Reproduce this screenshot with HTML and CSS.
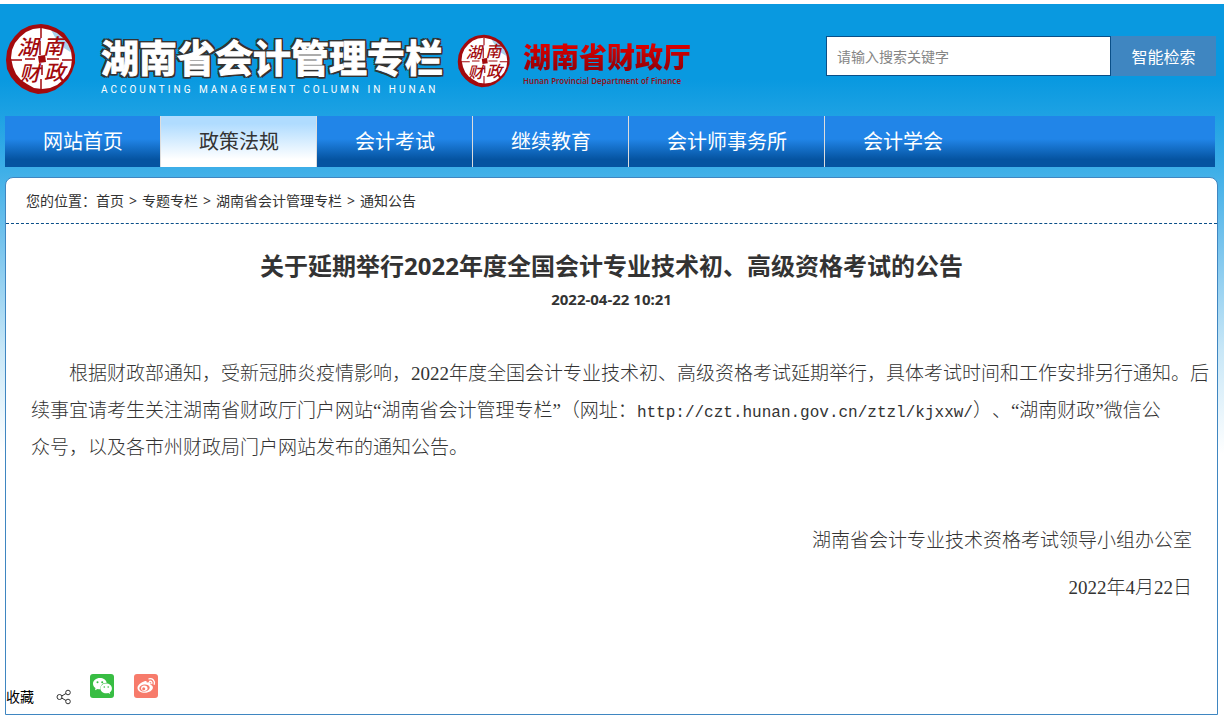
FILE: index.html
```html
<!DOCTYPE html>
<html lang="zh-CN">
<head>
  <meta charset="UTF-8">
  <meta name="viewport" content="width=device-width, initial-scale=1.0">
  <title>关于延期举行2022年度全国会计专业技术初、高级资格考试的公告</title>
  <link rel="stylesheet" href="styles.css">
</head>
<body>

<!-- seal used twice in the header -->
<svg class="defs" width="0" height="0" aria-hidden="true">
  <symbol id="seal" viewBox="0 0 72 72" overflow="visible">
    <circle cx="36" cy="36" r="33" fill="#fff"/>
    <path d="M46 7c10 3 18 11 21 23l-8-5-8-9z" fill="#a9d3ec"/>
    <path d="M28 2l8-1 7 1 8 3 8 5 5 7 4 7 2 8 0 8-3 9-4 7-6 6-7 5-8 3-9 1-8-2-8-4-6-5-5-6-4-8-1-9 1-9 3-8 5-7 6-6 8-4zM36 5l-8 1-7 3-6 5-5 6-3 7-1 8 2 9 3 7 5 6 6 4 7 4 8 1 8-1 7-3 6-5 5-6 3-7 1-8-1-8-3-7-5-6-6-5-7-3z" fill="#a30a0d" fill-rule="evenodd"/>
    <path d="M36 5v10M35 18v14M37 42v10M36 56v12M5 37h12M20 36h10M42 36h12M57 37h11" stroke="#a30a0d" stroke-width="1.500"/>
    <path d="M33 33l7-1 1 7-7 1z" fill="#a30a0d"/>
    <g class="seal-text">
      <text x="12" y="32">湖</text>
      <text x="38" y="31">南</text>
      <text x="14" y="58">财</text>
      <text x="39" y="57">政</text>
    </g>
  </symbol>
</svg>

<div class="container">
  <header class="header">
    <a href="#" class="logo">
      <svg class="seal" width="72" height="72" aria-hidden="true"><use href="#seal"/></svg>
      <span class="logo-text">
        <strong class="logo-name">湖南省会计管理专栏</strong>
        <span class="logo-en">ACCOUNTING MANAGEMENT COLUMN IN HUNAN</span>
      </span>
    </a>
    <a href="#" class="dept">
      <svg class="seal" width="54" height="54" aria-hidden="true"><use href="#seal"/></svg>
      <span class="dept-text">
        <strong class="dept-name">湖南省财政厅</strong>
        <span class="dept-en">Hunan Provincial Department of Finance</span>
      </span>
    </a>
    <form class="search">
      <input type="text" name="q" placeholder="请输入搜索关键字" aria-label="请输入搜索关键字">
      <button type="submit">智能检索</button>
    </form>
  </header>

  <nav class="nav">
    <a href="#">网站首页</a>
    <a href="#" class="active">政策法规</a>
    <a href="#">会计考试</a>
    <a href="#">继续教育</a>
    <a href="#">会计师事务所</a>
    <a href="#">会计学会</a>
  </nav>

  <main class="panel">
    <div class="position">
      您的位置：<a href="#">首页</a><span>&gt;</span><a href="#">专题专栏</a><span>&gt;</span><a href="#">湖南省会计管理专栏</a><span>&gt;</span><a href="#">通知公告</a>
    </div>

    <article class="article">
      <h1>关于延期举行2022年度全国会计专业技术初、高级资格考试的公告</h1>
      <time class="date">2022-04-22 10:21</time>
      <div class="content">
        <p>根据财政部通知，受新冠肺炎疫情影响，2022年度全国会计专业技术初、高级资格考试延期举行，具体考试时间和工作安排另行通知。后续事宜请考生关注湖南省财政厅门户网站“湖南省会计管理专栏”（网址：<span class="url">http://czt.hunan.gov.cn/ztzl/kjxxw/</span>）、“湖南财政”微信公<br>众号，以及各市州财政局门户网站发布的通知公告。</p>
      </div>
      <div class="sign">
        <p>湖南省会计专业技术资格考试领导小组办公室</p>
        <p>2022年4月22日</p>
      </div>
    </article>

    <div class="share">
      <a href="#" class="fav">收藏</a>
      <a href="#" class="share-link" aria-label="分享">
        <svg width="16" height="16" viewBox="0 0 16 16" fill="none" stroke="#333">
          <circle cx="3.500" cy="8" r="2.500"/>
          <circle cx="12" cy="3.500" r="2.300"/>
          <circle cx="12" cy="12.500" r="2.300"/>
          <path d="M5.700 7l4.300-2.500M5.700 9l4.300 2.500"/>
        </svg>
      </a>
      <a href="#" class="icon wechat" aria-label="微信">
        <svg width="24" height="24" viewBox="0 0 24 24">
          <path d="M10 4c-4 0-7 2.500-7 5.700 0 1.800 1 3.400 2.500 4.400L5 16.200l2.500-1.300c.8.200 1.600.3 2.500.3h.6c-.9-3.700 2.200-6.700 6.200-6.500C16.100 5.900 13.300 4 10 4z" fill="#fff"/>
          <path d="M16.200 9.600c-3.300 0-5.700 2.100-5.700 4.800s2.500 4.900 5.700 4.900c.7 0 1.400-.1 2-.3l2 1.100-.5-1.800c1.400-.9 2.200-2.300 2.200-3.900 0-2.700-2.500-4.800-5.700-4.800z" fill="#fff"/>
          <g fill="#38bd43"><circle cx="7.500" cy="8.300" r="1"/><circle cx="12.200" cy="8.300" r="1"/><circle cx="14.300" cy="13" r=".8"/><circle cx="18.200" cy="13" r=".8"/></g>
        </svg>
      </a>
      <a href="#" class="icon weibo" aria-label="微博">
        <svg width="24" height="24" viewBox="0 0 24 24">
          <path d="M10.500 7.200c1.400-.6 2.500-.2 2.300 1.500 1.900-.7 3.800-.7 3.900.7 0 .5-.2.900-.3 1.300 1.500.4 2.500 1.300 2.500 2.700 0 2.700-3.600 5.300-8.200 5.300-4 0-7.200-1.800-7.200-4.800 0-3 4-5.700 7-6.700z" fill="#fff"/>
          <ellipse cx="10.500" cy="14" rx="5.200" ry="3.500" fill="#f77b6b" transform="rotate(-8 10.500 14)"/>
          <ellipse cx="10.300" cy="14.300" rx="3.200" ry="2.700" fill="#fff"/>
          <circle cx="9.700" cy="14.800" r="1.500" fill="#f77b6b"/>
          <path d="M15 4.800c3.500-.8 6.300 2 5.200 5.500M15.500 7.300c1.700-.3 2.800.8 2.300 2.400" fill="none" stroke="#fff" stroke-width="1.300" stroke-linecap="round"/>
        </svg>
      </a>
    </div>
  </main>
</div>

</body>
</html>
```

FILE: styles.css
```css
* {
  box-sizing: border-box;
}

body {
  margin: 0;
  padding: 4px 0;
  font-family: "Noto Sans", "Noto Sans CJK SC", sans-serif;
  font-size: 14px;
  color: #333;
  background: #fff linear-gradient(#0999e0, #0999e0 76px, #3eafe8 166px, #78c4ed 240px, #c8e7f7 346px, #fff 450px) no-repeat 0 4px;
}

a {
  color: inherit;
  text-decoration: none;
}

.defs {
  position: absolute;
}

.container {
  padding: 0 6px 0 5px;
}

/* header */
.header {
  display: flex;
  height: 112px;
  padding-right: 2px;
}

.logo,
.dept {
  display: flex;
  align-items: flex-start;
}

.seal {
  flex: none;
  overflow: visible;
}

.seal-text {
  font-family: "Noto Sans CJK SC", sans-serif;
  font-size: 21px;
  font-style: italic;
  font-weight: 500;
  fill: #a30a0d;
}

.logo {
  padding-top: 19px;
}

.logo-text {
  display: flex;
  flex-direction: column;
  margin: 10px 0 0 24px;
}

.logo-name {
  font-size: 38px;
  line-height: 48px;
  color: #fff;
  white-space: nowrap;
  -webkit-text-stroke: 1px #fff;
  text-shadow: 2px 0 #333, -2px 0 #333, 0 2px #333, 0 -2px #333, 2px 2px #333, -2px 2px #333, 2px -2px #333, -2px -2px #333;
}

.logo-en {
  font-family: Roboto, sans-serif;
  font-size: 10px;
  line-height: 18px;
  letter-spacing: 3px;
  color: #fff;
  white-space: nowrap;
}

.dept {
  margin-left: 14px;
  padding-top: 30px;
}

.dept-text {
  display: flex;
  flex-direction: column;
  margin: 5px 0 0 12px;
}

.dept-name {
  font-size: 28px;
  font-weight: 900;
  line-height: 36px;
  white-space: nowrap;
  color: transparent;
  background: linear-gradient(#d80000 20%, #980008 80%);
  -webkit-background-clip: text;
  background-clip: text;
}

.dept-en {
  font-size: 8px;
  font-weight: 600;
  line-height: 12px;
  color: #8c1420;
  white-space: nowrap;
}

.search {
  display: flex;
  width: 390px;
  height: 40px;
  margin: 32px 0 0 auto;
}

.search input {
  flex: 1;
  min-width: 0;
  padding: 0 10px;
  border: 1px solid #0a4f88;
  font-family: inherit;
  font-size: 14px;
  background: #fff;
}

.search input::placeholder {
  color: #858585;
}

.search button {
  width: 105px;
  padding: 0;
  border: none;
  font-family: inherit;
  font-size: 16px;
  color: #fff;
  background: #3f86c1;
  cursor: pointer;
}

/* navigation */
.nav {
  display: flex;
  margin-right: 3px;
  background: linear-gradient(#2185e8, #2185e8 45%, #0554a1 85%);
}

.nav a {
  padding: 0 37px 0 38px;
  border-right: 1px solid #ddd;
  font-size: 20px;
  line-height: 51px;
  color: #fff;
}

.nav a:last-child {
  border-right: none;
}

.nav a.active {
  color: #333;
  background: linear-gradient(#b0dcff 15%, #fff 85%);
}

/* main panel */
.panel {
  margin-top: 10px;
  border: 1px solid #3f86c1;
  border-radius: 8px 8px 0 0;
  background: #fff;
}

.position {
  padding-left: 20px;
  border-bottom: 1px dashed #0a4f88;
  line-height: 45px;
}

.position span {
  margin: 0 5px;
}

.article {
  padding-top: 24px;
  text-align: center;
}

.article h1 {
  margin: 0;
  font-size: 24px;
  line-height: 36px;
}

.date {
  display: block;
  font-size: 15px;
  font-weight: bold;
  line-height: 30px;
}

.content,
.sign {
  font-family: "Liberation Serif", "Noto Sans CJK SC", serif;
  font-size: 19px;
  font-weight: 300;
  line-height: 37px;
  text-spacing-trim: space-all;
}

.content {
  padding: 41px 5px 0 25px;
  text-align: left;
}

.content p {
  margin: 0;
  text-indent: 2em;
}

.url {
  font-family: "Liberation Mono", monospace;
  font-size: 16px;
  line-height: 1;
}

.sign {
  padding: 56px 25px 0;
  text-align: right;
}

.sign p {
  margin: 0 0 10px;
}

.share {
  display: flex;
  align-items: flex-end;
  padding: 58px 0 5px;
  color: #000;
}

.fav {
  line-height: 24px;
}

.share-link {
  display: flex;
  margin: 0 18px 4px 22px;
}

.icon {
  display: flex;
  margin: 0 20px 11px 0;
  border-radius: 3px;
}

.wechat {
  background: #38bd43;
}

.weibo {
  background: #f77b6b;
}
```
